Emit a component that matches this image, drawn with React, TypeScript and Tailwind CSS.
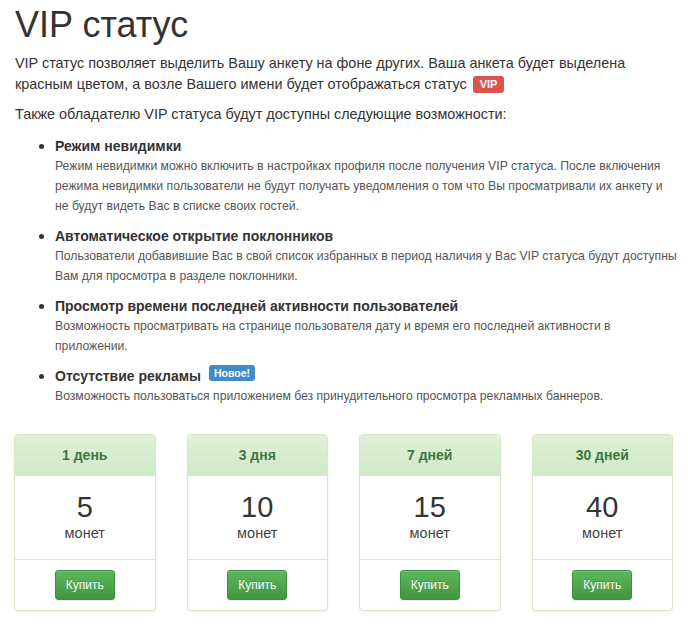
import React from 'react'

// lines are kept as in the original layout
const features = [
  {
    title: 'Режим невидимки',
    lines: [
      'Режим невидимки можно включить в настройках профиля после получения VIP статуса. После включения',
      'режима невидимки пользователи не будут получать уведомления о том что Вы просматривали их анкету и',
      'не будут видеть Вас в списке своих гостей.',
    ],
  },
  {
    title: 'Автоматическое открытие поклонников',
    lines: [
      'Пользователи добавившие Вас в свой список избранных в период наличия у Вас VIP статуса будут доступны',
      'Вам для просмотра в разделе поклонники.',
    ],
  },
  {
    title: 'Просмотр времени последней активности пользователей',
    lines: [
      'Возможность просматривать на странице пользователя дату и время его последней активности в',
      'приложении.',
    ],
  },
  {
    title: 'Отсутствие рекламы',
    lines: ['Возможность пользоваться приложением без принудительного просмотра рекламных баннеров.'],
    isNew: true,
  },
]

const plans = [
  { period: '1 день', price: 5 },
  { period: '3 дня', price: 10 },
  { period: '7 дней', price: 15 },
  { period: '30 дней', price: 40 },
]

function PlanCard({ period, price }: { period: string; price: number }) {
  return (
    <div className="rounded-[4px] border border-[#d6e9c6] bg-white shadow-[0_1px_2px_rgba(0,0,0,0.08)] overflow-hidden">
      {/* header */}
      <div className="h-[41px] flex items-center justify-center bg-gradient-to-b from-[#dff0d8] to-[#d0e9c6] border-b border-[#d6e9c6] text-[14px] font-bold text-[#3c763d]">
        {period}
      </div>
      {/* price */}
      <div className="pt-[15px] pb-[16px] text-center text-[#333]">
        <div className="text-[29px] leading-[32px]">{price}</div>
        <div className="text-[14.5px] leading-[20px] text-[#444]">монет</div>
      </div>
      {/* footer */}
      <div className="border-t border-[#d6e9c6] py-[10px] flex justify-center">
        <button className="h-[30px] px-[10px] rounded-[3px] border border-[#3e8f3e] bg-gradient-to-b from-[#5cb85c] to-[#419641] text-white text-[12px] [text-shadow:0_-1px_0_rgba(0,0,0,0.2)] shadow-[inset_0_1px_0_rgba(255,255,255,0.15),0_1px_1px_rgba(0,0,0,0.075)]">
          Купить
        </button>
      </div>
    </div>
  )
}

export default function App() {
  return (
    <div className="w-[688px] min-h-[639px] bg-white font-[family-name:Liberation_Sans,Arial,sans-serif] text-[#333]">
      <div className="pl-[15px] pr-[15px]">
        <h1 className="pt-[5px] text-[36px] leading-[40px] font-normal">VIP статус</h1>

        <p className="mt-[8px] text-[14.4px] leading-[21px]">
          VIP статус позволяет выделить Вашу анкету на фоне других. Ваша анкета будет выделена красным цветом, а возле Вашего имени будет отображаться статус{' '}
          <span className="inline-block ml-[2px] align-[1px] rounded-[3px] bg-[#d9534f] px-[7px] text-[11px] leading-[17px] font-bold text-white">
            VIP
          </span>
        </p>

        <p className="mt-[9px] text-[14.4px] leading-[21px]">
          Также обладателю VIP статуса будут доступны следующие возможности:
        </p>

        <ul className="mt-[9px] pl-[40px] list-disc marker:text-[#333]">
          {features.map((f, i) => (
            <li key={i} className={i > 0 ? 'mt-[8px]' : ''}>
              <div className="text-[14px] leading-[20px] font-bold text-[#333]">
                {f.title}
                {f.isNew && (
                  <span className="inline-block ml-[8px] align-[4px] rounded-[3px] bg-[#428bca] px-[5px] text-[10.5px] leading-[16px] font-bold text-white">
                    Новое!
                  </span>
                )}
              </div>
              <div className="text-[12.2px] leading-[20px] text-[#555]">
                {f.lines.map((line, j) => (
                  <div key={j} className="whitespace-nowrap">
                    {line}
                  </div>
                ))}
              </div>
            </li>
          ))}
        </ul>
      </div>

      {/* тарифы */}
      <div className="mt-[28px] pl-[14px] pr-[15px] grid grid-cols-4 gap-[31px]">
        {plans.map((p) => (
          <PlanCard key={p.period} period={p.period} price={p.price} />
        ))}
      </div>
    </div>
  )
}
